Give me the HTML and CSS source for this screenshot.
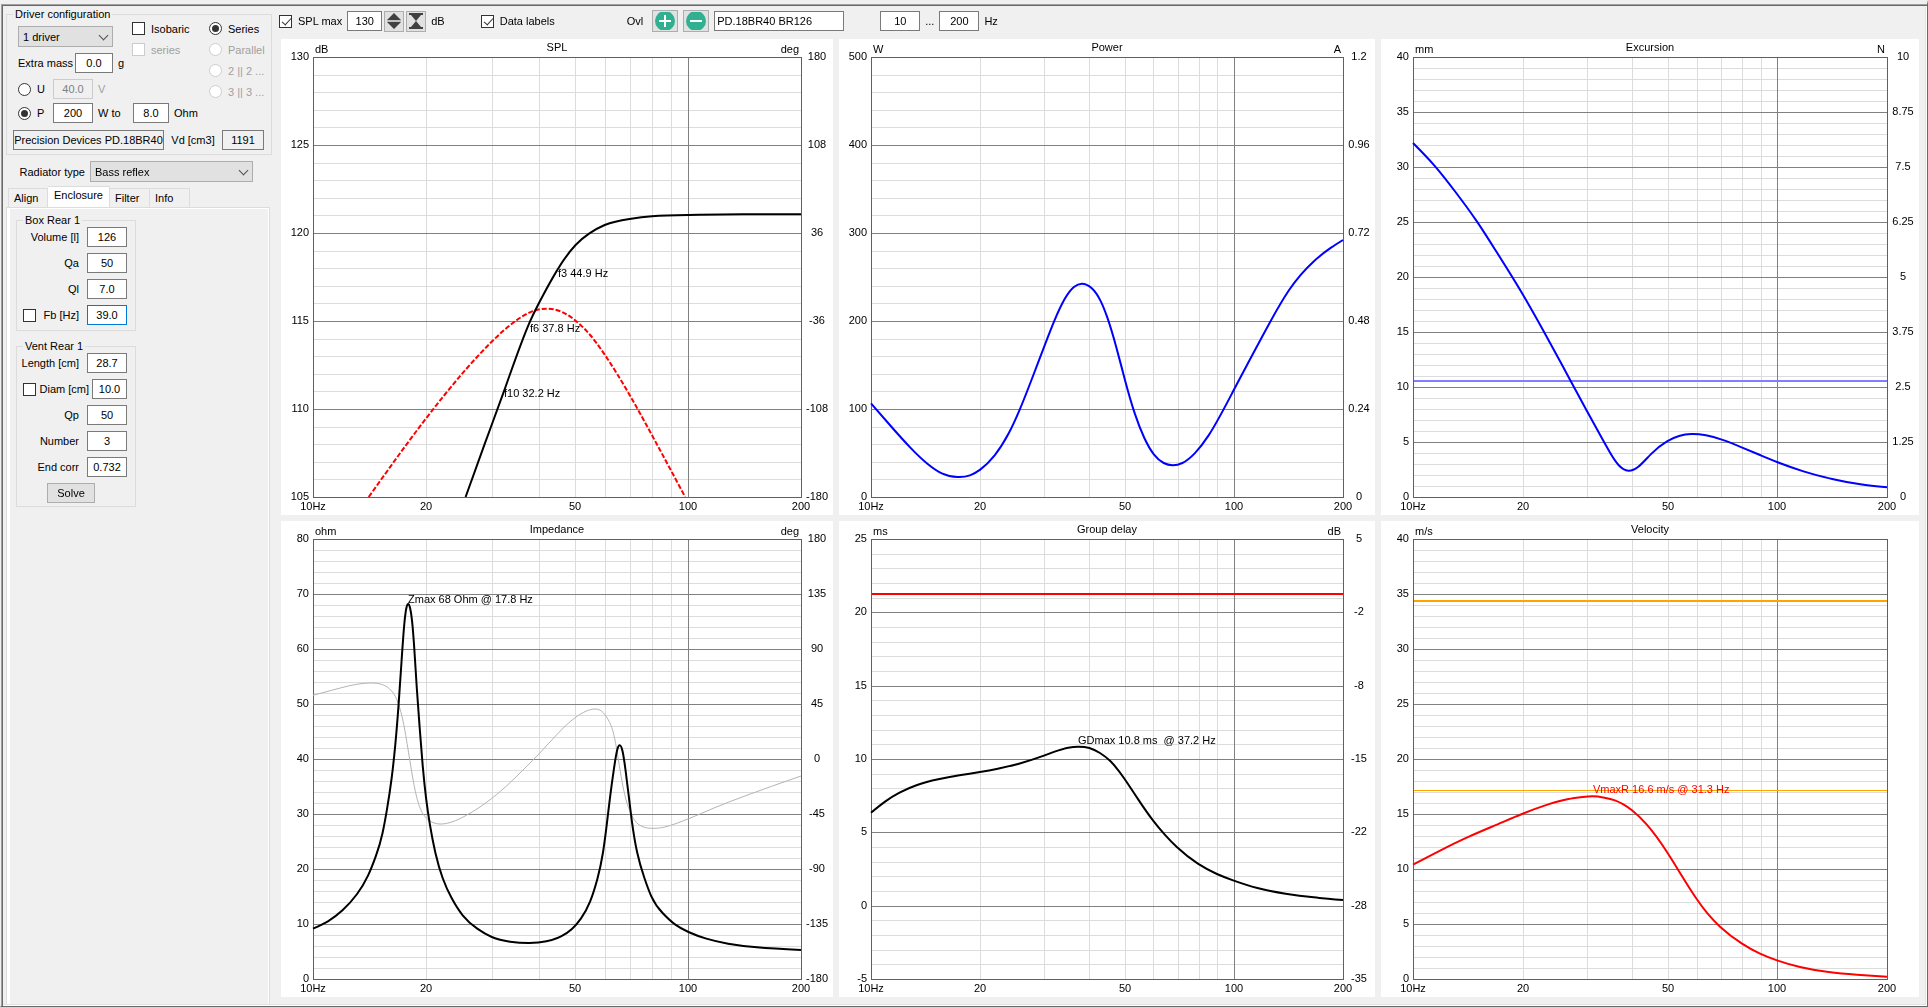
FILE: index.html
```html
<!DOCTYPE html>
<html lang="en">
<head>
    <meta charset="UTF-8">
    <meta name="viewport" content="width=device-width, initial-scale=1.0">
    <title>Loudspeaker simulation</title>
    <link rel="stylesheet" href="styles.css">
</head>
<body>

    <div class="app">
        <form class="sidebar">
            <fieldset class="group driver">
                <legend>Driver configuration</legend>
                <div class="driver-top">
                    <div class="driver-values">
                        <span class="select"><select id="driver-count" aria-label="Number of drivers"><option>1 driver</option></select></span>
                        <div class="row">
                            <label class="extra-label" for="extra-mass">Extra mass</label>
                            <input class="field mass" type="text" id="extra-mass" value="0.0">
                            <span>g</span>
                        </div>
                        <div class="row">
                            <label class="option source"><input type="radio" name="source">U</label>
                            <input class="field" type="text" aria-label="Voltage" value="40.0" disabled>
                            <span class="off">V</span>
                        </div>
                    </div>
                    <div class="options">
                        <label class="option"><input type="checkbox">Isobaric</label>
                        <label class="option off"><input type="checkbox" disabled>series</label>
                    </div>
                    <div class="options">
                        <label class="option"><input type="radio" name="wiring" checked>Series</label>
                        <label class="option off"><input type="radio" name="wiring" disabled>Parallel</label>
                        <label class="option off"><input type="radio" name="wiring" disabled>2 || 2 ...</label>
                        <label class="option off"><input type="radio" name="wiring" disabled>3 || 3 ...</label>
                    </div>
                </div>
                <div class="row power-row">
                    <label class="option source"><input type="radio" name="source" checked>P</label>
                    <input class="field" type="text" aria-label="Power" value="200">
                    <label class="load-label" for="load">W to</label>
                    <input class="field load" type="text" id="load" value="8.0">
                    <span>Ohm</span>
                </div>
                <div class="row driver-row">
                    <input class="field name" type="text" aria-label="Driver" value="Precision Devices PD.18BR40" readonly>
                    <label for="vd">Vd [cm3]</label>
                    <input class="field vd" type="text" id="vd" value="1191" readonly>
                </div>
            </fieldset>

            <div class="row radiator">
                <label for="radiator-type">Radiator type</label>
                <span class="select"><select id="radiator-type"><option>Bass reflex</option></select></span>
            </div>

            <div class="tabs" role="tablist">
                <button type="button" class="tab" role="tab">Align</button>
                <button type="button" class="tab active" role="tab" aria-selected="true">Enclosure</button>
                <button type="button" class="tab" role="tab">Filter</button>
                <button type="button" class="tab" role="tab">Info</button>
            </div>
            <div class="tab-panel" role="tabpanel">
                <fieldset class="group box">
                    <legend>Box Rear 1</legend>
                    <div class="param"><label for="volume">Volume [l]</label><input class="field" type="text" id="volume" value="126"></div>
                    <div class="param"><label for="qa">Qa</label><input class="field" type="text" id="qa" value="50"></div>
                    <div class="param"><label for="ql">Ql</label><input class="field" type="text" id="ql" value="7.0"></div>
                    <div class="param"><input type="checkbox" aria-label="Lock Fb"><label for="fb">Fb [Hz]</label><input class="field" type="text" id="fb" value="39.0" autofocus></div>
                </fieldset>
                <fieldset class="group vent">
                    <legend>Vent Rear 1</legend>
                    <div class="param"><label for="length">Length [cm]</label><input class="field" type="text" id="length" value="28.7"></div>
                    <div class="param tight"><input type="checkbox" aria-label="Lock diameter"><label for="diam">Diam [cm]</label><input class="field" type="text" id="diam" value="10.0"></div>
                    <div class="param"><label for="qp">Qp</label><input class="field" type="text" id="qp" value="50"></div>
                    <div class="param"><label for="number">Number</label><input class="field" type="text" id="number" value="3"></div>
                    <div class="param"><label for="end-corr">End corr</label><input class="field" type="text" id="end-corr" value="0.732"></div>
                    <button type="button" class="button solve">Solve</button>
                </fieldset>
            </div>
        </form>

        <main class="main">
            <div class="toolbar">
                <div class="tools spl-tools">
                    <label class="option"><input type="checkbox" checked>SPL max</label>
                    <input class="field spl-max" type="text" aria-label="SPL max value" value="130">
                    <div class="tools spins">
                        <button type="button" class="button spin" aria-label="Expand range">
                            <svg width="14" height="16" viewBox="0 0 14 16"><path d="M7 0 L14 7 H0Z M0 9 H14 L7 16Z" fill="#404040"/><path d="M0 8H14" stroke="#a0a0a0"/></svg>
                        </button>
                        <button type="button" class="button spin" aria-label="Fit range">
                            <svg width="14" height="16" viewBox="0 0 14 16"><path d="M0 0 H14 V2 H12 L7 8 L2 2 H0Z M0 16 H14 V14 H12 L7 8 L2 14 H0Z" fill="#404040"/></svg>
                        </button>
                    </div>
                    <span>dB</span>
                </div>
                <label class="option"><input type="checkbox" checked>Data labels</label>
                <div class="tools overlay-tools">
                    <label class="overlay-label" for="overlay-name">Ovl</label>
                    <button type="button" class="button round" aria-label="Add overlay">
                        <svg width="20" height="18" viewBox="0 0 20 18"><circle cx="10" cy="9" r="10" fill="#30b090"/><path d="M10 3V15M4 9H16" stroke="#fff" stroke-width="2"/></svg>
                    </button>
                    <button type="button" class="button round" aria-label="Remove overlay">
                        <svg width="20" height="18" viewBox="0 0 20 18"><circle cx="10" cy="9" r="10" fill="#30b090"/><path d="M4 9H16" stroke="#fff" stroke-width="2"/></svg>
                    </button>
                    <input class="field overlay-name" type="text" id="overlay-name" value="PD.18BR40 BR126">
                </div>
                <div class="tools range-tools">
                    <input class="field" type="text" aria-label="Lowest frequency" value="10">
                    <span>...</span>
                    <input class="field" type="text" aria-label="Highest frequency" value="200">
                    <span>Hz</span>
                </div>
            </div>
            <div class="charts">
                <svg class="chart" id="spl"></svg>
                <svg class="chart" id="power"></svg>
                <svg class="chart" id="excursion"></svg>
                <svg class="chart" id="impedance"></svg>
                <svg class="chart" id="delay"></svg>
                <svg class="chart" id="velocity"></svg>
            </div>
        </main>
    </div>

    <script src="charts.js"></script>
</body>
</html>
```

FILE: styles.css
```css
* {
    box-sizing: border-box;
}

body {
    margin: 0;
    background-color: #f0f0f0;
    color: #000;
    font-family: "Liberation Sans", Arial, sans-serif;
    font-size: 11px;
    line-height: 14px;
}

input, select, button {
    font: inherit;
    color: inherit;
    margin: 0;
}

.app {
    display: flex;
    height: 100vh;
    min-height: 640px;
    border: 1px solid #696969;
    border-top: 4px solid #f0f0f0;
    border-left-color: #f0f0f0;
    box-shadow: inset 1px 1px #a0a0a0, inset 2px 2px #696969, inset -1px -1px #fff, inset -2px -2px #e3e3e3;
}

/* left side */
.sidebar {
    display: flex;
    flex-direction: column;
    flex: none;
    width: 280px;
    padding: 3px 9px 2px 5px;
}

.group {
    min-width: 0;
    margin: 0;
    border: 1px solid #dcdcdc;
}

legend {
    padding: 0 2px;
}

.driver {
    padding: 1px 7px 4px 6px;
}

.driver-top {
    display: grid;
    grid-template-columns: 114px 77px 1fr;
    padding-left: 5px;
    height: 80px;
}

.driver-values {
    display: flex;
    flex-direction: column;
    gap: 6px;
    padding-top: 4px;
}

.row {
    display: flex;
    align-items: center;
    gap: 5px;
    white-space: nowrap;
}

.options {
    display: flex;
    flex-direction: column;
    gap: 8px;
}

.option {
    display: flex;
    align-items: center;
    gap: 6px;
    height: 13px;
    white-space: nowrap;
}

.off {
    color: #a0a0a0;
}

.source {
    width: 30px;
}

.extra-label {
    width: 52px;
}

.load-label {
    width: 30px;
}

.power-row {
    padding: 1px 0 0 5px;
}

.driver-row {
    justify-content: space-between;
    margin-top: 7px;
}

.select {
    position: relative;
    display: block;
}

.select::after {
    content: "";
    position: absolute;
    right: 6px;
    top: 6px;
    width: 6px;
    height: 6px;
    border: solid #505050;
    border-width: 0 1px 1px 0;
    transform: rotate(45deg);
}

select {
    appearance: none;
    width: 100%;
    height: 21px;
    padding: 0 4px;
    border: 1px solid #adadad;
    border-radius: 0;
    background-color: #e1e1e1;
}

.driver-values .select {
    width: 95px;
}

.radiator {
    justify-content: flex-end;
    margin: 6px 19px 0 0;
}

.radiator .select {
    width: 163px;
}

.field {
    width: 40px;
    height: 20px;
    padding: 0;
    border: 1px solid #7a7a7a;
    border-radius: 0;
    background-color: #fff;
    text-align: center;
}

.field:focus {
    outline: none;
    border-color: #0078d7;
}

.field:disabled {
    border-color: #cccccc;
    background-color: #f0f0f0;
    color: #808080;
}

.field:read-only:not(:disabled) {
    background-color: #f0f0f0;
}

.field.mass {
    width: 38px;
}

.field.load {
    width: 36px;
}

.field.name {
    width: 151px;
}

.field.vd {
    width: 42px;
}

input[type="checkbox"], input[type="radio"] {
    appearance: none;
    position: relative;
    flex: none;
    width: 13px;
    height: 13px;
    border: 1px solid #333;
    background-color: #fff;
}

input[type="radio"] {
    border-radius: 50%;
}

input[type="checkbox"]:disabled, input[type="radio"]:disabled {
    border-color: #cccccc;
}

input[type="radio"]:checked::after {
    content: "";
    position: absolute;
    inset: 2px;
    border-radius: 50%;
    background-color: #333;
}

input[type="checkbox"]:checked::after {
    content: "";
    position: absolute;
    left: 4px;
    top: 0;
    width: 4px;
    height: 8px;
    border: solid #333;
    border-width: 0 1px 1px 0;
    transform: rotate(42deg);
}

.tabs {
    display: flex;
    align-items: flex-end;
    margin-top: 4px;
    padding-left: 2px;
}

.tab {
    width: 40px;
    height: 19px;
    padding: 0 5px;
    border: 1px solid #dcdcdc;
    border-width: 1px 1px 0 0;
    background-color: #f0f0f0;
    text-align: left;
}

.tab:first-child {
    border-left-width: 1px;
}

.tab.active {
    width: 62px;
    height: 21px;
    padding-bottom: 4px;
    background-color: #fff;
    text-align: center;
}

.tab-panel {
    flex: 1;
    width: 264px;
    padding: 5px 7px;
    border: 1px solid #dcdcdc;
    border-bottom: 0;
    box-shadow: inset 3px 1px #fff, inset -1px 0 #fff;
}

.box, .vent {
    display: flex;
    flex-direction: column;
    gap: 6px;
    width: 120px;
    margin-left: 2px;
}

.box {
    padding: 0 8px 5px 6px;
}

.vent {
    margin-top: 8px;
    padding: 0 8px 3px 6px;
}

.param {
    display: flex;
    align-items: center;
    justify-content: flex-end;
    gap: 8px;
    height: 20px;
}

.param label {
    white-space: nowrap;
}

.param input[type="checkbox"] {
    margin-right: auto;
}

.tight {
    gap: 3px;
}

.tight .field {
    width: 35px;
}

.button {
    display: flex;
    align-items: center;
    justify-content: center;
    padding: 0;
    border: 1px solid #adadad;
    background-color: #e1e1e1;
}

.solve {
    width: 48px;
    height: 20px;
    margin-left: 24px;
}

/* right side */
.main {
    display: flex;
    flex-direction: column;
    flex: 1;
    min-width: 0;
    padding: 5px 8px 9px 0;
}

.toolbar {
    display: flex;
    align-items: center;
    height: 24px;
    margin: 0 0 6px -2px;
}

.tools {
    display: flex;
    align-items: center;
    gap: 5px;
}

.spl-tools {
    margin-right: 36px;
}

.spl-max {
    width: 35px;
}

.spins {
    gap: 2px;
    margin: 0 0 0 -3px;
}

.spin {
    width: 20px;
    height: 21px;
}

.round {
    width: 26px;
    height: 22px;
}

.overlay-tools {
    margin: 0 36px 0 72px;
}

.overlay-label {
    margin-right: 4px;
}

.overlay-name {
    width: 130px;
    padding: 0 2px;
    text-align: left;
}

.charts {
    display: grid;
    grid-template-columns: 552fr 536fr 538fr;
    grid-template-rows: 1fr 1fr;
    gap: 6px;
    flex: 1;
    min-height: 0;
}

.chart {
    display: block;
    width: 100%;
    height: 100%;
    min-width: 0;
    min-height: 0;
    background-color: #fff;
}

.chart line, .chart rect {
    shape-rendering: crispEdges;
}

.minor {
    stroke: #dcdcdc;
}

.major {
    stroke: #808080;
}

.frame {
    fill: none;
    stroke: #606060;
}

.curve {
    fill: none;
}

.middle {
    text-anchor: middle;
}

.end {
    text-anchor: end;
}
```

FILE: charts.js
```javascript
// curves are stored on a 1340 x 1320 canvas, origin in the top left corner
const CURVE_W = 1340;
const CURVE_H = 1320;

const charts = {
    spl: {
        title: 'SPL', left: 'dB', right: 'deg',
        leftTicks: [130, 125, 120, 115, 110, 105],
        rightTicks: [180, 108, 36, -36, -108, -180],
        curves: [
            { color: '#ff0000', width: 2, dash: '5 2', points: [[153, 1320], [257, 1162], [361, 1014], [420, 937], [490, 855], [556, 792], [596, 766], [641, 755], [686, 766], [721, 791], [761, 834], [801, 893], [869, 1013], [931, 1135], [1022, 1320]] },
            { color: '#000', width: 2, points: [[419, 1320], [471, 1162], [524, 1004], [596, 793], [634, 710], [673, 635], [721, 564], [758, 530], [801, 504], [869, 486], [931, 478], [1032, 474], [1180, 472], [1340, 472]] }
        ],
        notes: [[673, 659, 'f3 44.9 Hz'], [596, 824, 'f6 37.8 Hz'], [524, 1019, 'f10 32.2 Hz']]
    },
    power: {
        title: 'Power', left: 'W', right: 'A',
        leftTicks: [500, 400, 300, 200, 100, 0],
        rightTicks: [1.2, 0.96, 0.72, 0.48, 0.24, 0],
        curves: [
            { color: '#0000ff', width: 2, points: [[0, 1039], [61, 1113], [111, 1171], [161, 1221], [201, 1249], [246, 1260], [281, 1255], [310, 1238], [351, 1195], [391, 1129], [421, 1061], [461, 954], [492, 868], [521, 790], [551, 724], [576, 690], [599, 680], [626, 693], [651, 730], [671, 782], [696, 869], [720, 965], [749, 1070], [776, 1143], [803, 1192], [831, 1218], [856, 1225], [884, 1218], [919, 1189], [958, 1136], [1028, 1003], [1078, 903], [1132, 797], [1187, 699], [1256, 614], [1306, 572], [1340, 549]] }
        ]
    },
    excursion: {
        title: 'Excursion', left: 'mm', right: 'N',
        leftTicks: [40, 35, 30, 25, 20, 15, 10, 5, 0],
        rightTicks: [10, 8.75, 7.5, 6.25, 5, 3.75, 2.5, 1.25, 0],
        limits: [{ y: 973, color: '#8080ff', width: 2 }],
        curves: [
            { color: '#0000ff', width: 2, points: [[0, 258], [60, 325], [118, 402], [181, 494], [234, 581], [308, 708], [369, 822], [420, 921], [489, 1057], [531, 1138], [556, 1185], [581, 1224], [609, 1241], [636, 1230], [672, 1192], [718, 1153], [752, 1137], [787, 1131], [828, 1135], [873, 1148], [929, 1171], [981, 1194], [1029, 1215], [1104, 1243], [1185, 1266], [1265, 1282], [1340, 1291]] }
        ]
    },
    impedance: {
        title: 'Impedance', left: 'ohm', right: 'deg',
        leftTicks: [80, 70, 60, 50, 40, 30, 20, 10, 0],
        rightTicks: [180, 135, 90, 45, 0, -45, -90, -135, -180],
        curves: [
            { color: '#b4b4b4', width: 1, points: [[0, 469], [51, 454], [101, 440], [156, 432], [191, 437], [216, 456], [236, 499], [251, 567], [266, 665], [281, 757], [296, 812], [311, 837], [326, 849], [351, 855], [381, 849], [421, 829], [490, 779], [541, 731], [586, 683], [621, 644], [671, 585], [721, 535], [751, 516], [774, 510], [793, 517], [811, 543], [826, 587], [836, 645], [846, 712], [856, 767], [869, 813], [884, 845], [901, 861], [930, 868], [966, 864], [1001, 852], [1032, 839], [1101, 807], [1181, 773], [1259, 742], [1340, 711]] },
            { color: '#000', width: 2, points: [[0, 1169], [41, 1147], [81, 1114], [121, 1065], [151, 1010], [173, 950], [191, 882], [203, 812], [216, 717], [226, 617], [235, 497], [243, 369], [251, 252], [257, 204], [262, 195], [267, 209], [273, 257], [278, 327], [285, 447], [293, 567], [301, 677], [311, 782], [321, 857], [336, 941], [356, 1017], [381, 1078], [411, 1129], [451, 1169], [491, 1194], [541, 1208], [594, 1212], [641, 1207], [681, 1192], [711, 1170], [736, 1138], [761, 1087], [781, 1019], [796, 942], [806, 862], [816, 772], [826, 692], [836, 630], [842, 619], [850, 637], [858, 692], [866, 762], [875, 842], [890, 940], [910, 1017], [929, 1072], [960, 1122], [995, 1157], [1031, 1179], [1080, 1199], [1140, 1214], [1219, 1225], [1340, 1233]] }
        ],
        notes: [[262, 193, 'Zmax 68 Ohm @ 17.8 Hz']]
    },
    delay: {
        title: 'Group delay', left: 'ms', right: 'dB',
        leftTicks: [25, 20, 15, 10, 5, 0, -5],
        rightTicks: [5, -2, -8, -15, -22, -28, -35],
        limits: [{ y: 165, color: '#ff0000', width: 2 }],
        curves: [
            { color: '#000', width: 2, points: [[0, 821], [41, 787], [81, 761], [131, 738], [191, 721], [251, 709], [309, 699], [360, 689], [420, 674], [491, 650], [530, 635], [560, 626], [589, 623], [620, 627], [650, 642], [680, 667], [718, 717], [759, 782], [801, 845], [834, 887], [869, 925], [928, 974], [982, 1005], [1028, 1024], [1097, 1047], [1177, 1064], [1257, 1075], [1340, 1083]] }
        ],
        notes: [[589, 614, 'GDmax 10.8 ms \u00a0@ 37.2 Hz']]
    },
    velocity: {
        title: 'Velocity', left: 'm/s', right: '',
        leftTicks: [40, 35, 30, 25, 20, 15, 10, 5, 0],
        rightTicks: [],
        limits: [{ y: 185, color: '#ffa500', width: 2 }, { y: 753, color: '#ffa500', width: 1 }],
        curves: [
            { color: '#ff0000', width: 2, points: [[0, 977], [78, 934], [158, 893], [239, 856], [308, 825], [380, 797], [440, 780], [480, 774], [508, 772], [541, 776], [571, 784], [596, 797], [619, 814], [661, 857], [718, 939], [762, 1014], [800, 1077], [833, 1124], [868, 1163], [929, 1213], [981, 1244], [1029, 1264], [1094, 1284], [1175, 1299], [1255, 1307], [1340, 1313]] }
        ],
        notes: [[509, 763, 'VmaxR 16.6 m/s @ 31.3 Hz', '#ff0000']]
    }
};

// natural cubic spline through the points
function smoothPath(p) {
    const n = p.length;
    const c = new Array(n).fill(0);
    const m = new Array(n).fill(0);
    const bend = new Array(n).fill(0);
    const width = i => p[i + 1][0] - p[i][0];
    const slope = i => (p[i + 1][1] - p[i][1]) / width(i);

    for (let i = 1; i < n - 1; i++) {
        const div = 2 * (width(i - 1) + width(i)) - width(i - 1) * c[i - 1];
        c[i] = width(i) / div;
        m[i] = (6 * (slope(i) - slope(i - 1)) - width(i - 1) * m[i - 1]) / div;
    }
    for (let i = n - 2; i > 0; i--) {
        bend[i] = m[i] - c[i] * bend[i + 1];
    }

    let d = `M${p[0][0]} ${p[0][1]}`;
    for (let i = 0; i < n - 1; i++) {
        const w = width(i);
        const start = slope(i) - w * (2 * bend[i] + bend[i + 1]) / 6;
        const end = slope(i) + w * (bend[i] + 2 * bend[i + 1]) / 6;
        d += `C${p[i][0] + w / 3} ${p[i][1] + start * w / 3} ${p[i + 1][0] - w / 3} ${p[i + 1][1] - end * w / 3} ${p[i + 1][0]} ${p[i + 1][1]}`;
    }
    return d;
}

function drawChart(id, chart) {
    const svg = document.getElementById(id);
    const box = svg.getBoundingClientRect();
    const left = 32, top = 18;
    const right = Math.round(box.width) - 32;
    const bottom = Math.round(box.height) - 18;
    const w = right - left, h = bottom - top;
    const freqX = f => left + Math.round(w * Math.log(f / 10) / Math.log(20));
    const px = x => left + x * w / CURVE_W;
    const py = y => top + y * h / CURVE_H;
    const line = (x1, y1, x2, y2, cls) => `<line class="${cls}" x1="${x1 + 0.5}" y1="${y1 + 0.5}" x2="${x2 + 0.5}" y2="${y2 + 0.5}"/>`;
    const text = (x, y, value, cls, color) => `<text x="${Math.round(x)}" y="${Math.round(y)}" class="${cls}" fill="${color || '#000'}">${value}</text>`;
    let out = '';

    for (let f = 20; f < 100; f += 10) {
        out += line(freqX(f), top, freqX(f), bottom, 'minor');
    }
    const steps = (chart.leftTicks.length - 1) * 5;
    const rowY = i => top + Math.round(h * i / steps);
    for (let i = 1; i < steps; i++) {
        if (i % 5) out += line(left, rowY(i), right, rowY(i), 'minor');
    }
    for (let i = 5; i < steps; i += 5) {
        out += line(left, rowY(i), right, rowY(i), 'major');
    }
    out += line(freqX(100), top, freqX(100), bottom, 'major');
    out += `<rect class="frame" x="${left + 0.5}" y="${top + 0.5}" width="${w}" height="${h}"/>`;

    (chart.limits || []).forEach(l => {
        out += `<line x1="${left + 1}" x2="${right}" y1="${py(l.y)}" y2="${py(l.y)}" stroke="${l.color}" stroke-width="${l.width}"/>`;
    });
    chart.curves.forEach(c => {
        const d = smoothPath(c.points.map(p => [px(p[0]), py(p[1])]));
        out += `<path class="curve" d="${d}" stroke="${c.color}" stroke-width="${c.width}" stroke-dasharray="${c.dash || 'none'}"/>`;
    });

    out += text(box.width / 2, 12, chart.title, 'middle');
    out += text(left + 2, 14, chart.left, 'start');
    out += text(right - 2, 14, chart.right, 'end');
    chart.leftTicks.forEach((t, i) => {
        out += text(left - 4, rowY(i * 5) + 3, t, 'end');
    });
    chart.rightTicks.forEach((t, i) => {
        out += text(right + 16, rowY(i * 5) + 3, t, 'middle');
    });
    [10, 20, 50, 100, 200].forEach(f => {
        out += text(freqX(f), bottom + 13, f === 10 ? '10Hz' : f, 'middle');
    });
    (chart.notes || []).forEach(n => {
        out += text(px(n[0]), py(n[1]), n[2], 'start', n[3]);
    });
    svg.innerHTML = out;
}

function drawAll() {
    Object.keys(charts).forEach(id => drawChart(id, charts[id]));
}

window.addEventListener('resize', drawAll);
drawAll();

const fb = document.getElementById('fb');
fb.focus();
fb.setSelectionRange(0, 0);
```
